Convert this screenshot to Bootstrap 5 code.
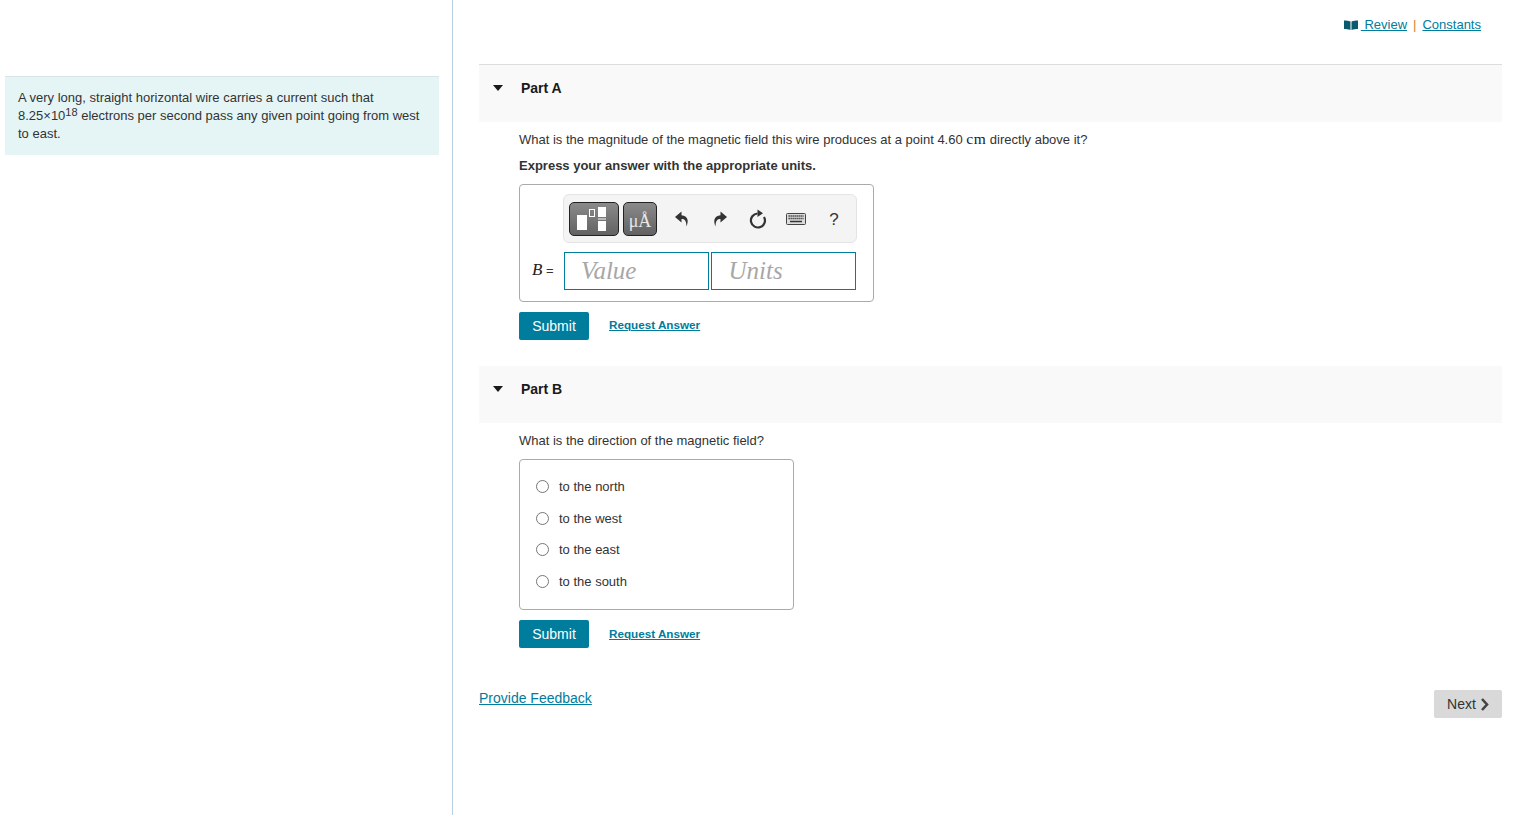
<!DOCTYPE html>
<html lang="en">
<head>
<meta charset="utf-8">
<title>Part A and Part B</title>
<link rel="stylesheet" href="https://cdn.jsdelivr.net/npm/bootstrap@5.3.0/dist/css/bootstrap.min.css">
<style>
html,body{height:100%;overflow:hidden}
body{font-family:"Liberation Sans",Arial,sans-serif;font-size:13px;line-height:19px;color:#333;background:#fff}
a{color:#007c9c}
.shell{height:815px}
.side{width:453px;flex:none;border-right:1px solid #b9cfe0;padding:76px 13px 0 5px}
.intro{background:#e5f5f6;border-top:1px solid #d8e4e8;height:79px;padding:12px 13px 0;line-height:18px}
.intro sup{font-size:11px;top:-.4em;line-height:0}
.pane{flex:1 1 auto;min-width:0;padding:0 21px 0 26px}
.toplinks{height:64px;padding:15px 21px 0 0;line-height:20px;font-size:13px;gap:6px}
.revlink{white-space:pre;gap:3px}
.revlink svg{margin-top:-1px}
.sep{color:#d0842c}
.parthead{background:#f9f9f9;height:57px;padding:14px 0 0 14px;font-size:14px;font-weight:700;color:#1a1a1a;gap:18px;line-height:19px}
.parthead.ruled{border-top:1px solid #ddd;height:58px}
.caret{width:0;height:0;border-left:5.500px solid transparent;border-right:5.500px solid transparent;border-top:6px solid #1a1a1a;margin-top:6px}
.partbody{padding:0 0 0 40px}
.q1{margin:8px 0 0;line-height:19px}
.q2{margin:7px 0 0;font-weight:700;line-height:19px}
.cmunit{font-family:"Liberation Serif",serif;font-size:15.500px;line-height:0;letter-spacing:.5px;color:#222}
.ansbox{width:355px;height:118px;margin-top:9px;border:1px solid #aaa;border-radius:4px;padding:9px 17px 0 12px}
.tools{width:294px;height:49px;margin-left:31px;background:#f4f4f4;border:1px solid #e4e4e4;border-radius:6px;padding:7px 0 0 5px}
.tmpl{height:34px;border:1px solid #222;border-radius:5px;background:linear-gradient(#8a8a8a,#626262);color:#e8e8e8;font-family:"Liberation Serif",serif}
.tmpl1{width:50px;margin-right:4px}
.tmpl2{width:34px;font-size:18px;line-height:1;padding-top:9px;margin-right:6px}
.ico{width:38px;height:34px;color:#333}
.qm{font-size:17px;color:#333}
.inrow{margin-top:9px}
.bvar{width:32px;font-size:13px;white-space:nowrap;margin-top:-2px}
.bvar i{font-family:"Liberation Serif",serif;font-size:17px;line-height:0;color:#222}
.field{width:146px;height:38px;border:1px solid #007c9c;padding:0 0 0 16px;font-family:"Liberation Serif",serif;font-style:italic;font-size:25px;line-height:36px;color:#a7a7a7}
.field + .field{width:145px;margin-left:2px}
.sub{background:#007c9c;color:#fff;border:0;border-radius:2px;width:70px;height:28px;padding:1px 0 0;font-size:14px;line-height:19px}
.sub:hover{background:#007c9c;color:#fff}
.actions{margin-top:10px;gap:20px}
.req{font-size:11.700px;font-weight:700;line-height:19px;margin-top:-3px}
.reqb{margin-top:-1px}
.parta{height:302px}
.choices{width:275px;height:151px;margin-top:9px;border:1px solid #aaa;border-radius:4px;padding:11px 16px 0}
.opt{height:31.600px;gap:10px;margin:0}
.opt .form-check-input{width:13px;height:13px;margin:0;border:1px solid #767676;flex:none;background-color:#fff}
.footrow{margin-top:30px}
.fb{font-size:14px;line-height:19px;margin-top:11px}
.nxt{background:#d9d9d9;border:0;border-radius:2px;width:68px;height:28px;color:#333;font-size:14px;line-height:19px;padding:0;gap:4px;margin-top:12px}
.nxt:hover{background:#d9d9d9;color:#333}
</style>
</head>
<body>
<div class="shell d-flex">
  <aside class="side">
    <div class="intro">A very long, straight horizontal wire carries a current such that 8.25×10<sup>18</sup> electrons per second pass any given point going from west to east.</div>
  </aside>
  <main class="pane">
    <div class="toplinks d-flex justify-content-end align-items-start">
      <span class="revlink d-inline-flex align-items-center"><svg width="14" height="10" viewBox="0 0 14 10" aria-hidden="true"><path d="M0 .5c2 0 4.500 0 6.500 1v8.500c-2-1-4.500-1-6.500-1zM14 .5c-2 0-4.500 0-6.500 1v8.500c2-1 4.500-1 6.500-1z" fill="#0a5a6e"/></svg><a href="#"> Review</a></span>
      <span class="sep">|</span>
      <a href="#">Constants</a>
    </div>

    <section class="parta">
      <div class="parthead ruled d-flex"><span class="caret"></span><span>Part A</span></div>
      <div class="partbody">
        <p class="q1">What is the magnitude of the magnetic field this wire produces at a point 4.60 <span class="cmunit">cm</span> directly above it?</p>
        <p class="q2">Express your answer with the appropriate units.</p>
        <div class="ansbox">
          <div class="tools d-flex">
            <div class="tmpl tmpl1 d-flex align-items-center justify-content-center">
              <svg width="36" height="26" viewBox="0 0 36 26" aria-hidden="true"><rect x="1" y="9" width="10" height="15" fill="#fff"/><rect x="13.500" y="3.500" width="5" height="7" fill="none" stroke="#fff"/><rect x="22" y="1" width="8" height="10" fill="#fff"/><rect x="22" y="12.500" width="8" height="1" fill="#fff"/><rect x="22" y="15" width="8" height="10" fill="#fff"/></svg>
            </div>
            <div class="tmpl tmpl2 text-center">μÅ</div>
            <div class="ico d-flex align-items-center justify-content-center">
              <svg width="14" height="16" viewBox="0 0 14 16" aria-hidden="true"><path d="M6.500 .5 0 6l6.500 5.500V8c3.200 0 4.800 1.500 5 7.500 2.300-5.500 1.700-10.700-5-11.300z" fill="#333"/></svg>
            </div>
            <div class="ico d-flex align-items-center justify-content-center">
              <svg width="14" height="16" viewBox="0 0 14 16" aria-hidden="true"><path d="M7.500 .5 14 6l-6.500 5.500V8c-3.200 0-4.800 1.500-5 7.500C.2 10 .8 4.800 7.500 4.200z" fill="#333"/></svg>
            </div>
            <div class="ico d-flex align-items-center justify-content-center">
              <svg width="18" height="20" viewBox="0 0 18 20" aria-hidden="true"><path d="M15 8A7 7 0 1 1 8.500 4.500" fill="none" stroke="#333" stroke-width="2.200"/><path d="M8.500 .5 14 4.200 8.500 8z" fill="#333"/></svg>
            </div>
            <div class="ico d-flex align-items-center justify-content-center">
              <svg width="20" height="12" viewBox="0 0 20 12" aria-hidden="true"><rect x=".5" y=".5" width="19" height="11" rx="1" fill="#dcdcdc" stroke="#444"/><path d="M2.500 3h15M2.500 5.500h15" stroke="#333" stroke-width="1.300" stroke-dasharray="1.300 .7"/><path d="M4 8.500h12" stroke="#333" stroke-width="1.500"/></svg>
            </div>
            <div class="ico qm d-flex align-items-center justify-content-center">?</div>
          </div>
          <div class="inrow d-flex align-items-center">
            <span class="bvar"><i>B</i> =</span>
            <div class="field">Value</div>
            <div class="field">Units</div>
          </div>
        </div>
        <div class="actions d-flex align-items-center">
          <button type="button" class="btn sub">Submit</button>
          <a href="#" class="req">Request Answer</a>
        </div>
      </div>
    </section>

    <section>
      <div class="parthead d-flex"><span class="caret"></span><span>Part B</span></div>
      <div class="partbody">
        <p class="q1">What is the direction of the magnetic field?</p>
        <div class="choices">
          <label class="opt d-flex align-items-center"><input class="form-check-input" type="radio" name="dir"><span>to the north</span></label>
          <label class="opt d-flex align-items-center"><input class="form-check-input" type="radio" name="dir"><span>to the west</span></label>
          <label class="opt d-flex align-items-center"><input class="form-check-input" type="radio" name="dir"><span>to the east</span></label>
          <label class="opt d-flex align-items-center"><input class="form-check-input" type="radio" name="dir"><span>to the south</span></label>
        </div>
        <div class="actions d-flex align-items-center">
          <button type="button" class="btn sub">Submit</button>
          <a href="#" class="req reqb">Request Answer</a>
        </div>
      </div>
    </section>

    <div class="footrow d-flex justify-content-between align-items-start">
      <a href="#" class="fb">Provide Feedback</a>
      <button type="button" class="btn nxt d-flex align-items-center justify-content-center">Next
        <svg width="9" height="13" viewBox="0 0 9 13" aria-hidden="true"><path d="M2 1l5 5.500L2 12" fill="none" stroke="#444" stroke-width="2.600"/></svg>
      </button>
    </div>
  </main>
</div>
</body>
</html>
